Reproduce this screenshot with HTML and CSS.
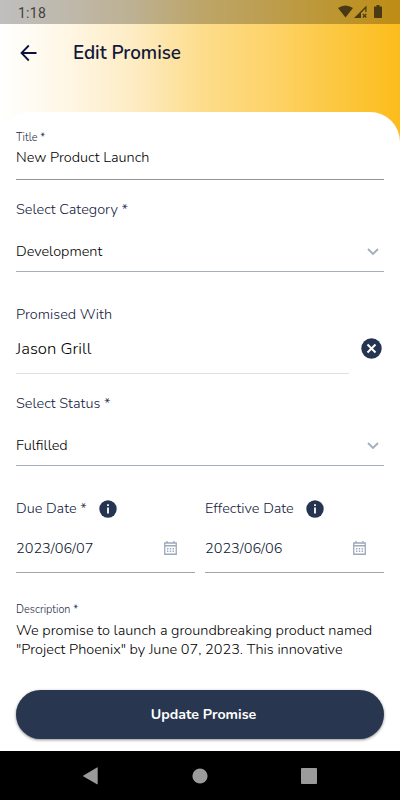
FILE: index.html
```html
<!DOCTYPE html>
<html lang="en">
<head>
<meta charset="utf-8">
<meta name="viewport" content="width=device-width, initial-scale=1">
<title>Edit Promise</title>
<link rel="stylesheet" href="styles.css">
</head>
<body>
<div class="screen">
  <div class="status-bar">
    <span class="clock">1:18</span>
    <svg class="status-icons" width="46" height="14" viewBox="0 0 46 14">
      <path d="M0 3Q7.500-2 15 3L7.500 12.500Z"/>
      <path d="M16 13L28.500.500V7H27.300V3.800L23 8V13Z"/>
      <path class="signal-x" d="M24.800 9L28.300 12.500M28.300 9L24.800 12.500"/>
      <path d="M36.500 1.500H38.500V0H41.500V1.500H43.500Q44 1.500 44 2V12Q44 13 43.500 13H36.500Q36 13 36 12V2Z"/>
    </svg>
  </div>
  <header class="app-bar">
    <svg class="back" width="18" height="18" viewBox="0 0 18 18"><path d="M16.500 9H2M8.800 1.500L1.500 9L8.800 16.500"/></svg>
    <h1>Edit Promise</h1>
  </header>
  <main class="sheet">
    <section class="title-field">
      <label class="small-label">Title *</label>
      <div class="value title-value">New Product Launch</div>
    </section>
    <section class="select-field">
      <label class="label">Select Category *</label>
      <div class="row"><span class="value">Development</span><svg class="chevron" width="12" height="8" viewBox="0 0 12 8"><path d="M1 1L6 6L11 1"/></svg></div>
    </section>
    <section class="person-field">
      <label class="label">Promised With</label>
      <div class="person-row">
        <div class="person-value">Jason Grill</div>
        <svg class="clear" width="21" height="21" viewBox="0 0 21 21"><circle cx="10.500" cy="10.500" r="10.200"/><path d="M6.500 6.500L14.500 14.500M14.500 6.500L6.500 14.500"/></svg>
      </div>
    </section>
    <section class="select-field">
      <label class="label">Select Status *</label>
      <div class="row"><span class="value">Fulfilled</span><svg class="chevron" width="12" height="8" viewBox="0 0 12 8"><path d="M1 1L6 6L11 1"/></svg></div>
    </section>
    <div class="dates">
      <section class="date-field">
        <div class="date-label"><label class="label">Due Date *</label><svg width="18" height="18" viewBox="0 0 18 18"><circle cx="9" cy="9" r="8.700"/><path d="M8.100 4.200h1.800v1.800h-1.800zM8.100 7.500h1.800v6h-1.800z"/></svg></div>
        <div class="row date-row"><span class="value date-value">2023/06/07</span><svg class="calendar" width="13" height="14" viewBox="0 0 13 14"><path d="M.750 2H12.250V13.250H.750ZM.750 4.750H12.250M3 0V2M10 0V2"/><path class="dots" d="M3 7.750H10M3 10.250H10"/></svg></div>
      </section>
      <section class="date-field">
        <div class="date-label"><label class="label">Effective Date</label><svg width="18" height="18" viewBox="0 0 18 18"><circle cx="9" cy="9" r="8.700"/><path d="M8.100 4.200h1.800v1.800h-1.800zM8.100 7.500h1.800v6h-1.800z"/></svg></div>
        <div class="row date-row"><span class="value date-value">2023/06/06</span><svg class="calendar" width="13" height="14" viewBox="0 0 13 14"><path d="M.750 2H12.250V13.250H.750ZM.750 4.750H12.250M3 0V2M10 0V2"/><path class="dots" d="M3 7.750H10M3 10.250H10"/></svg></div>
      </section>
    </div>
    <section class="description">
      <label class="small-label">Description *</label>
      <p>We promise to launch a groundbreaking product named<br>"Project Phoenix" by June 07, 2023. This innovative</p>
    </section>
    <button class="submit" type="button">Update Promise</button>
  </main>
  <nav class="nav-bar">
    <svg width="16" height="18" viewBox="0 0 16 18"><path d="M14.700.700V17Q14.700 17.700 14 17.300L.500 9.500Q-.200 9 .500 8.500L14 .500Q14.700 0 14.700.700Z"/></svg>
    <svg width="16" height="16" viewBox="0 0 16 16"><circle cx="8" cy="8" r="7.600"/></svg>
    <svg width="16" height="16" viewBox="0 0 16 16"><rect width="16" height="16" rx="1"/></svg>
  </nav>
</div>
</body>
</html>
```
FILE: styles.css
```css
* { box-sizing: border-box; }
body { margin: 0; font-family: Nunito, "Open Sans", sans-serif; }
svg { display: block; flex: none; }
.screen {
  width: 400px; height: 800px; overflow: hidden;
  display: flex; flex-direction: column;
  background: linear-gradient(90deg, #fff 0%, #fff7e6 16%, #fdecc4 33%, #fddd8d 50%, #fdd36a 67%, #fcc841 84%, #fcbc1c 100%);
}
.status-bar {
  height: 24px; padding: 0 16px 0 18px; flex: none;
  display: flex; align-items: center; justify-content: space-between;
  background: rgba(0, 0, 0, .25);
}
.clock { font: 400 14px/24px Roboto, sans-serif; color: #42413c; padding-top: 2px; letter-spacing: .25px; }
.status-icons { fill: #493a13; }
.signal-x { fill: none; stroke: #493a13; stroke-width: 1.200; }
.app-bar { height: 88px; flex: none; display: flex; align-items: flex-start; padding: 20px; }
.back { fill: none; stroke: #09123c; stroke-width: 1.800; }
h1 { margin: -3px 0 0 35px; font-size: 18.900px; line-height: 24px; font-weight: 600; color: #10183d; letter-spacing: -.050px; }
.sheet { height: 639px; flex: none; padding: 16px 16px 0; background: #fff; border-radius: 30px 30px 0 0; font-weight: 300; }
.title-field { height: 52px; border-bottom: 1px solid #949494; padding-top: 2px; }
.small-label { display: block; font-size: 10.900px; line-height: 16px; color: #1c2744; }
.label { display: block; font-size: 14.500px; line-height: 18px; padding-bottom: 2px; color: #142040; }
.value { font-size: 14.500px; line-height: 18px; padding-bottom: 2px; color: #000; }
.title-value { margin-top: 2px; }
.select-field { height: 92px; padding-top: 20px; border-bottom: 1px solid #a7afbd; }
.row { display: flex; align-items: center; justify-content: space-between; height: 20px; margin-top: 22px; }
.chevron { margin-right: 5px; fill: none; stroke: #a3adbd; stroke-width: 1.800; }
.person-field { height: 102px; padding-top: 33px; }
.person-row { display: flex; justify-content: space-between; padding-right: 2px; margin-top: 13px; }
.person-value { width: 333px; height: 36px; border-bottom: 1px solid #e0e0e0; font-size: 16.700px; line-height: 21px; color: #000; }
.clear { fill: #253450; }
.clear path { stroke: #fff; stroke-width: 2; }
.dates { display: grid; grid-template-columns: 1fr 1fr; gap: 10px; padding-top: 33px; }
.date-field { height: 74px; border-bottom: 1px solid #a5a5a5; }
.date-label { display: flex; align-items: center; gap: 12px; height: 20px; }
.date-label svg { fill: #253450; }
.date-label path { fill: #fff; }
.date-row { margin-top: 20px; padding-right: 18px; }
.date-value { color: #0b1430; }
.calendar { margin-bottom: 2px; fill: none; stroke: #9ca8bb; stroke-width: 1.300; }
.dots { stroke-dasharray: 1.400 1.400; }
.description { height: 117px; padding-top: 29px; }
.description p { margin: 3px 0 0; font-size: 14.500px; line-height: 19px; color: #000; white-space: nowrap; }
.submit {
  display: block; width: 100%; height: 49px; border: 0; border-radius: 25px; padding: 0 0 0 7px;
  background: #28364f; color: #fff; font: 700 14.200px/49px Nunito, "Open Sans", sans-serif;
  box-shadow: 0 1px 3px rgba(0, 0, 0, .45);
}
.nav-bar { height: 49px; flex: none; background: #000; display: flex; justify-content: space-between; align-items: center; padding: 0 83px; fill: #9b9b9b; }
```
